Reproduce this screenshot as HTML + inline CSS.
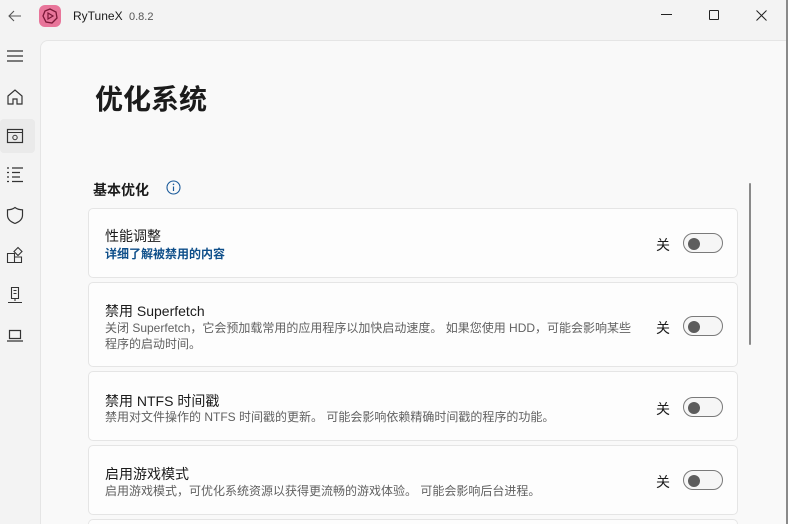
<!DOCTYPE html>
<html style="overflow:hidden;width:788px;height:524px"><head><meta charset="utf-8"><style>
*{margin:0;padding:0;box-sizing:border-box}
body{width:788px;height:524px;overflow:hidden;background:#f3f3f3;font-family:"Liberation Sans","Noto Sans CJK SC",sans-serif;position:relative;color:#1b1b1b}
.abs{position:absolute}
.panel{position:absolute;left:40px;top:40px;width:746px;height:484px;background:#f9f9f9;border-top:1px solid #e5e5e5;border-left:1px solid #e5e5e5;border-top-left-radius:8px}
.edge{position:absolute;right:0;top:0;width:2px;height:524px;background:#8a8a8a}
.card{position:absolute;left:88px;width:650px;background:#fdfdfd;border:1px solid #e5e5e5;border-radius:5px}
.t{position:absolute;left:16px;font-size:14px;color:#1b1b1b}
.d{position:absolute;left:16px;font-size:12px;color:#616161;line-height:16px}
.off{position:absolute;left:567px;font-size:14px}
.tg{position:absolute;left:594px;width:40px;height:20px;border:1px solid #7a7a7a;border-radius:10px;background:#f6f6f6}
.tg:after{content:"";position:absolute;left:4px;top:4px;width:12px;height:12px;border-radius:50%;background:#5d5d5d}
svg{position:absolute}
</style></head><body>
<svg style="left:7px;top:8px" width="16" height="16" viewBox="0 0 16 16"><path d="M14 8H2M7 3L2 8l5 5" fill="none" stroke="#555" stroke-width="1.1"/></svg>
<div class="abs" style="left:39px;top:5px;width:22px;height:22px;border-radius:6px;background:#e8759a"></div>
<svg style="left:41px;top:7px" width="18" height="18" viewBox="0 0 18 18"><polygon points="9,2 15,5 16,11 11,16 5,15 2,9 4,4" fill="none" stroke="#7a1838" stroke-width="1.3"/><polygon points="7,6 12,9 7,12" fill="none" stroke="#7a1838" stroke-width="1.2"/></svg>
<div class="abs" style="left:73px;top:9px;font-size:12px;color:#1b1b1b">RyTuneX <span style="font-size:11px;color:#555">&nbsp;0.8.2</span></div>
<div class="abs" style="left:661px;top:14px;width:11px;height:1px;background:#222"></div>
<div class="abs" style="left:709px;top:10px;width:10px;height:10px;border:1px solid #222;border-radius:1px"></div>
<svg style="left:756px;top:10px" width="11" height="11" viewBox="0 0 11 11"><path d="M0.5 0.5l10 10M10.5 0.5l-10 10" stroke="#222" stroke-width="1"/></svg>
<div class="abs" style="left:0;top:119px;width:35px;height:34px;background:#eaeaea;border-radius:4px"></div>
<svg style="left:6px;top:48px" width="18" height="16" viewBox="0 0 18 16"><path d="M1 3h16M1 8h16M1 13h16" stroke="#333" stroke-width="1.2"/></svg>
<svg style="left:6px;top:88px" width="18" height="18" viewBox="0 0 18 18"><path d="M2 8l7-6 7 6v8h-5v-5H7v5H2z" fill="none" stroke="#333" stroke-width="1.2"/></svg>
<svg style="left:6px;top:127px" width="18" height="18" viewBox="0 0 18 18"><rect x="1.5" y="2.5" width="15" height="13" fill="none" stroke="#333" stroke-width="1.2"/><path d="M1.5 5.5h15" stroke="#333"/><circle cx="9" cy="10.5" r="2.2" fill="none" stroke="#333"/></svg>
<svg style="left:6px;top:166px" width="18" height="18" viewBox="0 0 18 18"><path d="M1 2h2M1 6.5h2M1 11h2M1 15.5h2M6 2h11M6 6.5h8M6 11h8M6 15.5h11" stroke="#333" stroke-width="1.3"/></svg>
<svg style="left:6px;top:206px" width="18" height="19" viewBox="0 0 18 19"><path d="M9 1.5C7 3 4.5 3.8 1.5 3.8v5.5c0 4.5 3.5 6.7 7.5 8.2 4-1.5 7.5-3.7 7.5-8.2V3.8C13.5 3.8 11 3 9 1.5z" fill="none" stroke="#333" stroke-width="1.2"/></svg>
<svg style="left:6px;top:246px" width="18" height="18" viewBox="0 0 18 18"><path d="M1.5 7.5h7v9h-7zM8.5 11h7v5.5h-7zM12 1.5l4 4-4 4-4-4z" fill="none" stroke="#333" stroke-width="1.1"/></svg>
<svg style="left:6px;top:286px" width="18" height="19" viewBox="0 0 18 19"><path d="M5.5 1.5h7v11h-7zM7.5 4.5h3M7.5 7.5h3M9 12.5v2.5M2 16.5h14" fill="none" stroke="#333" stroke-width="1.1"/></svg>
<svg style="left:6px;top:328px" width="18" height="16" viewBox="0 0 18 16"><path d="M3.5 2.5h11v8h-11zM1 13h16" fill="none" stroke="#333" stroke-width="1.2"/></svg>
<div class="panel"></div>
<div class="abs" style="left:95px;top:78px;font-size:28px;font-weight:bold;color:#1b1b1b">优化系统</div>
<div class="abs" style="left:93px;top:180px;font-size:14px;font-weight:bold">基本优化</div>
<svg style="left:166px;top:180px" width="15" height="15" viewBox="0 0 15 15"><circle cx="7.5" cy="7.5" r="6.5" fill="none" stroke="#1a5a9a" stroke-width="1.1"/><path d="M7.5 6.5v4.5" stroke="#1a5a9a" stroke-width="1.2"/><circle cx="7.5" cy="4.3" r=".8" fill="#1a5a9a"/></svg>
<div class="card" style="top:208px;height:70px"><div class="t" style="top:17px">性能调整</div><div class="d" style="top:37px;color:#0f4f8a;font-weight:bold;font-size:12px">详细了解被禁用的内容</div><div class="off" style="top:26px">关</div><div class="tg" style="top:24px"></div></div>
<div class="card" style="top:282px;height:85px"><div class="t" style="top:18px">禁用 Superfetch</div><div class="d" style="top:37px">关闭 Superfetch，它会预加载常用的应用程序以加快启动速度。 如果您使用 HDD，可能会影响某些<br>程序的启动时间。</div><div class="off" style="top:35px">关</div><div class="tg" style="top:33px"></div></div>
<div class="card" style="top:371px;height:70px"><div class="t" style="top:19px">禁用 NTFS 时间戳</div><div class="d" style="top:37px">禁用对文件操作的 NTFS 时间戳的更新。 可能会影响依赖精确时间戳的程序的功能。</div><div class="off" style="top:27px">关</div><div class="tg" style="top:25px"></div></div>
<div class="card" style="top:445px;height:70px"><div class="t" style="top:18px">启用游戏模式</div><div class="d" style="top:37px">启用游戏模式，可优化系统资源以获得更流畅的游戏体验。 可能会影响后台进程。</div><div class="off" style="top:26px">关</div><div class="tg" style="top:24px"></div></div>
<div class="card" style="top:519px;height:5px;border-bottom:none;border-radius:5px 5px 0 0"></div>
<div class="abs" style="left:749px;top:183px;width:2px;height:162px;background:#8a8a8a;border-radius:1px"></div>
<div class="edge"></div>
</body></html>
